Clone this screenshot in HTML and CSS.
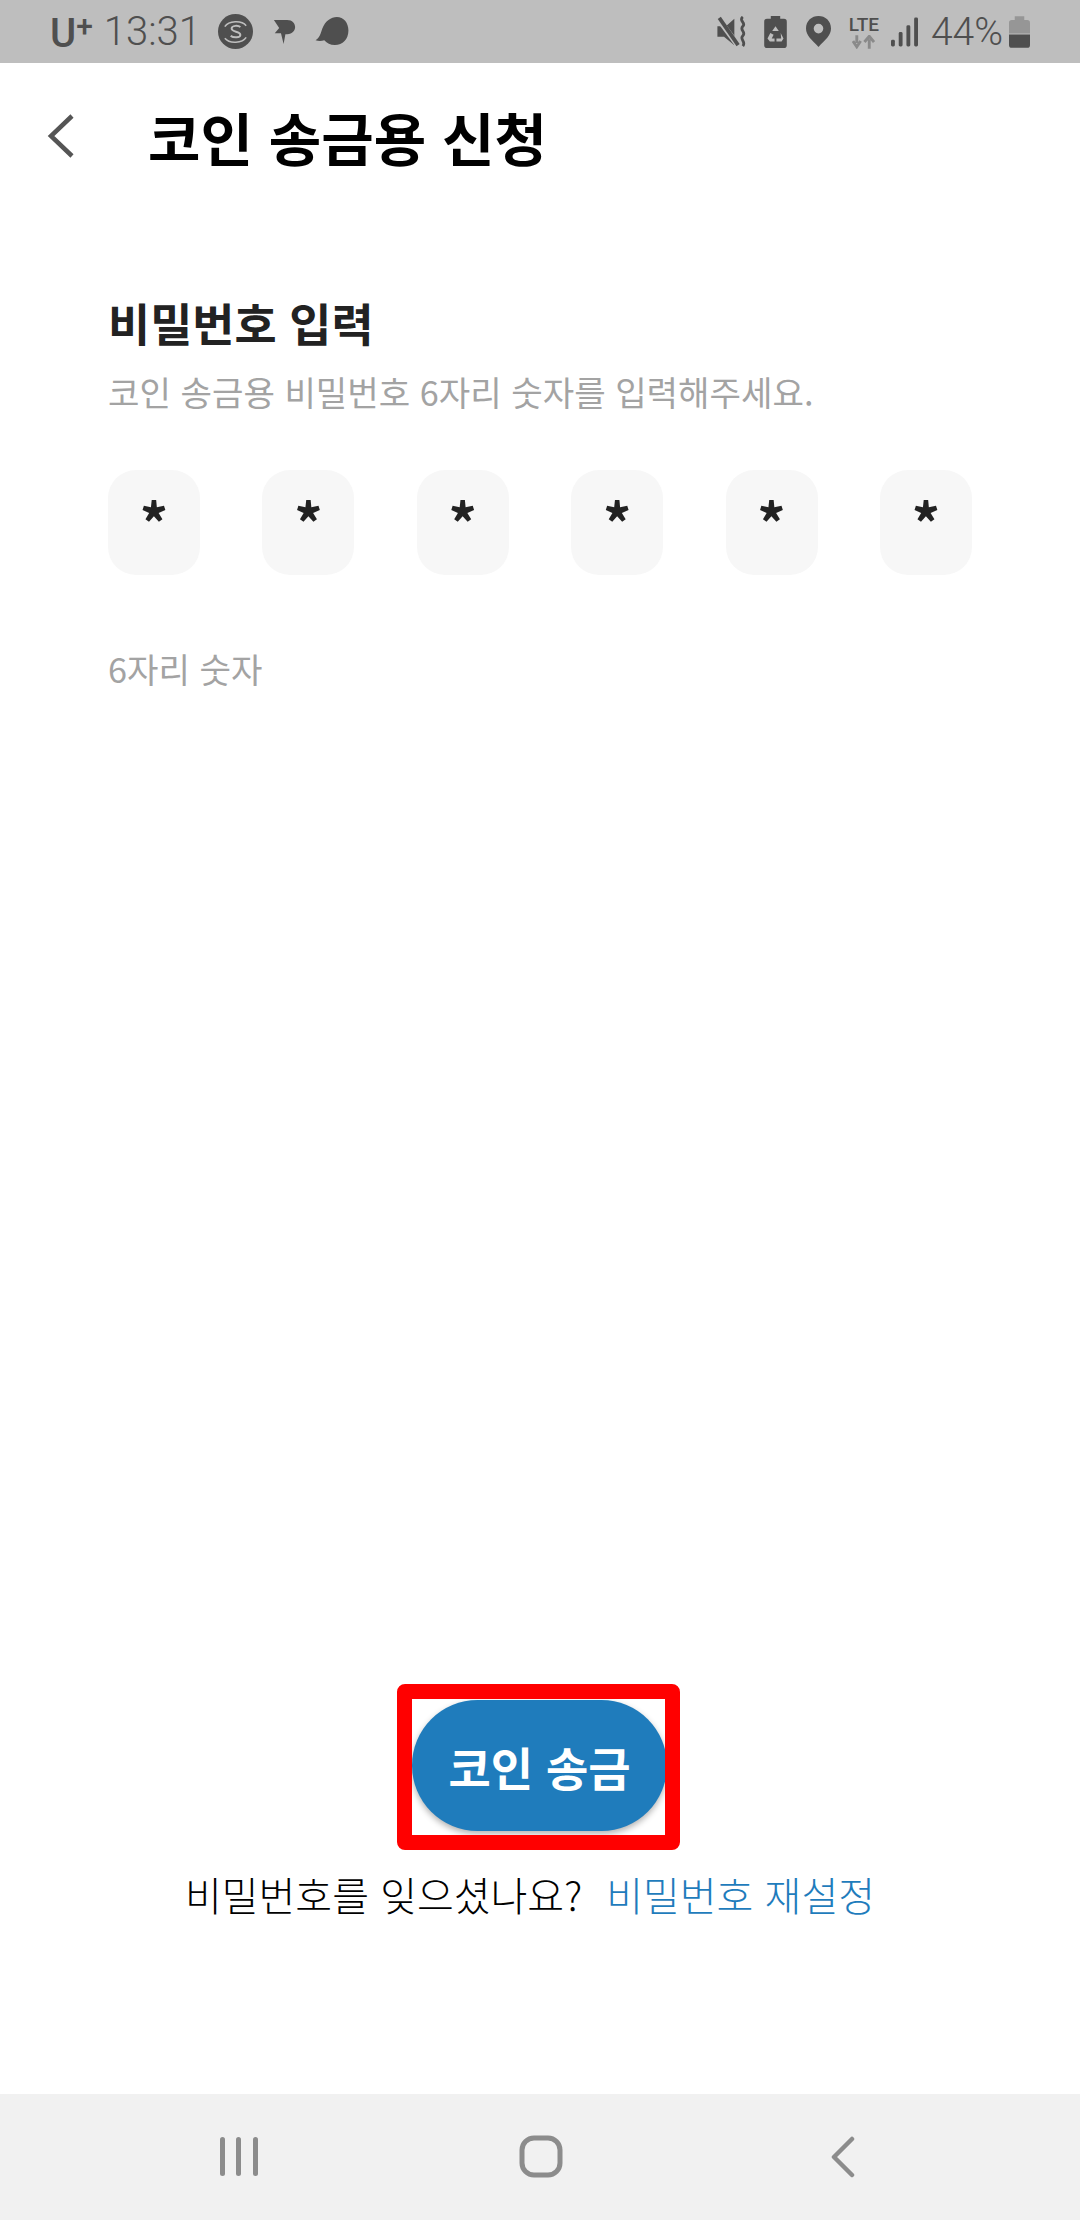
FILE: index.html
```html
<!DOCTYPE html>
<html lang="ko">
<head>
<meta charset="utf-8">
<title>코인 송금용 신청</title>
<link rel="stylesheet" href="styles.css">
</head>
<body>
<div class="screen">
  <div class="status">
    <div class="status-left">
      <span class="carrier">U<sup>+</sup></span>
      <span class="clock">13:31</span>
      <svg class="ic-s" width="35" height="35" viewBox="0 0 36 36"><circle cx="18" cy="18" r="18" fill="#4f4f4f"/><path d="M7 13c4-6 17-7 22-1M29 24c-4 6-17 7-22 1" fill="none" stroke="#bebebe" stroke-width="1.600"/><path d="M23 13.500c-2-2-9-2-9 1.500 0 4 9 2.500 9 6.500 0 3-7 3-10 1" fill="none" stroke="#bebebe" stroke-width="2"/></svg>
      <svg class="ic-p" width="23" height="29" viewBox="0 0 26 30"><path d="M1 2h15c6 0 9 4 9 8s-3 8-9 8h-2l-2 11-3-12-7 0 5-6z" fill="#4f4f4f"/></svg>
      <svg class="ic-b" width="34" height="29" viewBox="0 0 34 30"><path d="M0 24C4 22 5 18 7 12 10 4 16 0 22 0c7 0 12 6 12 14 0 9-6 15-14 15-5 0-8-2-11-5-3 1-6 1-9 0z" fill="#4f4f4f"/></svg>
    </div>
    <div class="status-right">
      <svg width="30" height="32" viewBox="0 0 31 34"><path d="M0 11h6l3 0 9-8v28L7 22H0z" fill="#4f4f4f"/><path d="M1 3l20 27" stroke="#bebebe" stroke-width="6"/><path d="M2 2l20 29" stroke="#4f4f4f" stroke-width="4"/><path d="M27 1c-5 4 4 6 0 10s4 6 0 10 4 6 0 11" fill="none" stroke="#4f4f4f" stroke-width="3"/></svg>
      <svg class="gap-a" width="23" height="32" viewBox="0 0 24 34"><path d="M7 0h10v3h4c2 0 3 1 3 3v25c0 2-1 3-3 3H3c-2 0-3-1-3-3V6c0-2 1-3 3-3h4z" fill="#4f4f4f"/><path d="M12 11l3.500 5h-7zM6.500 18l3.500 2-2 4h3v3H6l-2.500-3zM17.500 18l3 6-2 3H13v-3h5z" fill="#bebebe"/></svg>
      <svg class="gap-b" width="25" height="31" viewBox="0 0 26 32"><path fill-rule="evenodd" d="M13 0c7 0 13 5 13 13 0 7-6 12-13 19C6 25 0 20 0 13 0 5 6 0 13 0zm0 8a5 5 0 1 0 0 10 5 5 0 0 0 0-10z" fill="#4f4f4f"/></svg>
      <div class="lte"><span class="lte-text">LTE</span><svg width="23" height="14" viewBox="0 0 24 14"><path d="M5 0v8M1 6l4 6 4-6" fill="none" stroke="#8a8a8a" stroke-width="3"/><path d="M18 14V4M13 7l5-6 5 6" fill="none" stroke="#8a8a8a" stroke-width="3"/></svg></div>
      <svg class="gap-d" width="27" height="30" viewBox="0 0 28 30"><g fill="#4f4f4f"><rect x="0" y="23" width="4" height="7" rx="1.500"/><rect x="8" y="15" width="4" height="15" rx="1.500"/><rect x="16" y="8" width="4" height="22" rx="1.500"/><rect x="24" y="0" width="4" height="30" rx="1.500"/></g></svg>
      <span class="pct">44%</span>
      <svg class="gap-e" width="21" height="32" viewBox="0 0 22 33"><path d="M6 0h10v4h3c2 0 3 1 3 3v11H0V7c0-2 1-3 3-3h3z" fill="#969696"/><path d="M0 19h22v11c0 2-1 3-3 3H3c-2 0-3-1-3-3z" fill="#4f4f4f"/></svg>
    </div>
  </div>

  <header class="appbar">
    <svg class="back" width="28" height="44" viewBox="0 0 28 44"><path d="M25 2L4 22l21 20" fill="none" stroke="#555" stroke-width="4.500"/></svg>
    <h1 class="title">코인 송금용 신청</h1>
  </header>

  <main class="content">
    <h2 class="heading">비밀번호 입력</h2>
    <p class="desc">코인 송금용 비밀번호 6자리 숫자를 입력해주세요.</p>
    <div class="pins">
      <div class="pin">*</div><div class="pin">*</div><div class="pin">*</div><div class="pin">*</div><div class="pin">*</div><div class="pin">*</div>
    </div>
    <p class="hint">6자리 숫자</p>
  </main>

  <div class="actions">
    <div class="highlight"><button class="send">코인 송금</button></div>
    <p class="forgot"><span>비밀번호를 잊으셨나요?</span><a class="reset">비밀번호 재설정</a></p>
  </div>

  <nav class="navbar">
    <svg width="38" height="40" viewBox="0 0 38 40"><g fill="#8c8c8c"><rect x="0" y="0" width="5" height="39" rx="2.500"/><rect x="16" y="0" width="5" height="39" rx="2.500"/><rect x="33" y="0" width="5" height="39" rx="2.500"/></g></svg>
    <svg class="nav-home" width="44" height="44" viewBox="0 0 44 44"><rect x="3" y="3" width="38" height="37" rx="12" fill="none" stroke="#8c8c8c" stroke-width="5"/></svg>
    <svg class="nav-back" width="26" height="42" viewBox="0 0 26 42"><path d="M22 3L4 21l18 18" fill="none" stroke="#8c8c8c" stroke-width="4.500" stroke-linecap="round" stroke-linejoin="round"/></svg>
  </nav>
</div>
</body>
</html>
```
FILE: styles.css
```css
* { box-sizing: border-box; }
html, body { margin: 0; padding: 0; background: #fff; }
body { font-family: "Noto Sans CJK KR", "Noto Sans", sans-serif; }
.screen { width: 1080px; height: 2220px; display: flex; flex-direction: column; overflow: hidden; }

.status { height: 63px; flex: none; background: #bebebe; color: #4f4f4f; display: flex; justify-content: space-between; align-items: center; padding: 0 50px 0 50px; font-family: Roboto, sans-serif; }
.status-left, .status-right { display: flex; align-items: center; }
.carrier { font-size: 40px; font-weight: 500; line-height: 40px; position: relative; top: 2px; }
.carrier sup { font-size: 30px; line-height: 0; vertical-align: 11px; }
.clock { font-size: 40px; font-weight: 300; margin-left: 11px; line-height: 44px; }
.ic-s { margin-left: 17px; }
.ic-p { margin-left: 20px; }
.ic-b { margin-left: 19px; }
.gap-a { margin-left: 17px; }
.gap-b { margin-left: 19px; }
.lte { margin-left: 17px; width: 32px; display: flex; flex-direction: column; align-items: center; }
.lte-text { font-size: 19px; font-weight: 500; line-height: 20px; }
.gap-d { margin-left: 11px; }
.pct { font-size: 39px; font-weight: 300; margin-left: 13px; line-height: 44px; }
.gap-e { margin-left: 6px; }

.appbar { height: 150px; flex: none; display: flex; align-items: center; padding: 0 0 5px 47px; }
.back { flex: none; }
.title { margin: 0 0 0 73px; font-size: 57px; font-weight: 700; color: #000; line-height: 80px; }

.content { flex: 1; padding: 80px 108px 0 108px; }
.heading { margin: 0; font-size: 45.800px; font-weight: 700; color: #222; line-height: 58px; }
.desc { margin: 18px 0 0; font-size: 34.200px; font-weight: 400; color: #a3a3a3; line-height: 44px; }
.pins { margin-top: 57px; display: flex; justify-content: space-between; }
.pin { width: 92px; height: 105px; border-radius: 28px; background: #f7f7f7; color: #222; font-size: 56px; font-weight: 700; line-height: 101px; text-align: center; }
.hint { margin: 71px 0 0; font-size: 34.200px; font-weight: 400; color: #a3a3a3; line-height: 44px; }

.actions { flex: none; display: flex; flex-direction: column; align-items: center; padding-bottom: 171px; }
.highlight { width: 283px; height: 166px; border: 15px solid #f00; border-radius: 8px; background: #fff; margin-right: 3px; overflow: hidden; padding-top: 1px; }
.send { display: block; width: 255px; height: 131px; border: 0; border-radius: 66px; background: #1f7cbc; color: #fff; font-family: inherit; font-size: 46px; font-weight: 700; box-shadow: 0 3px 6px rgba(0,0,0,.3); }
.forgot { margin: 15px 20px 0 0; font-size: 40px; font-weight: 300; color: #000; line-height: 58px; display: flex; gap: 24px; }
.reset { color: #1f7cbc; }

.navbar { height: 126px; flex: none; background: #f1f1f1; display: flex; align-items: center; padding-left: 220px; }
.nav-home { margin-left: 261px; }
.nav-back { margin-left: 267px; }
```
